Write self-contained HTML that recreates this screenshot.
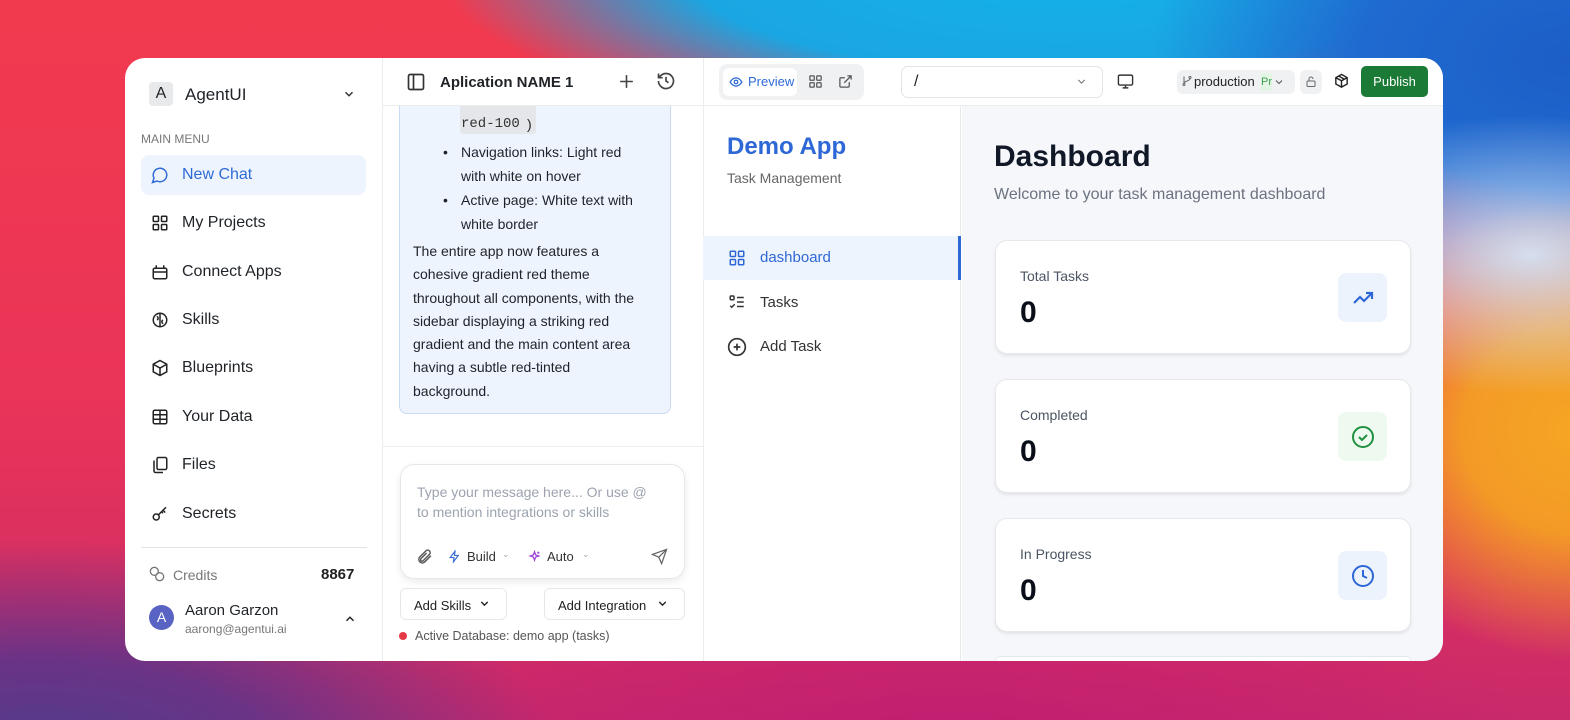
<!DOCTYPE html>
<html><head><meta charset="utf-8">
<style>
*{box-sizing:border-box;margin:0;padding:0}
html,body{width:1570px;height:720px;overflow:hidden}
body{font-family:"Liberation Sans",sans-serif;position:relative;
background:
radial-gradient(ellipse 260px 140px at 1530px 255px,rgba(215,228,245,.95) 0%,rgba(215,228,245,0) 100%),
radial-gradient(ellipse 260px 230px at 1580px 430px,#f6a623 0%,#f39a26 45%,rgba(243,154,38,0) 100%),
radial-gradient(ellipse 420px 260px at 1570px 60px,#1c5ec6 0%,#1f6ad0 50%,rgba(31,106,208,0) 100%),
radial-gradient(ellipse 620px 170px at 1060px -30px,#14b2ea 0%,#1aa6e2 60%,rgba(26,166,226,0) 100%),
radial-gradient(ellipse 520px 220px at 40px 760px,#4e3d8c 0%,#6a3386 45%,rgba(106,51,134,0) 100%),
radial-gradient(ellipse 600px 160px at 950px 740px,#c21d72 0%,rgba(194,29,114,0) 100%),
linear-gradient(180deg,#f23a4e 0%,#ea3458 55%,#c92a6a 100%);}
.win{position:absolute;left:125px;top:58px;width:1318px;height:603px;background:#fff;border-radius:20px;overflow:hidden}
.abs{position:absolute}
svg{display:block}
.nav{position:absolute;left:16px;width:225px;height:40px;display:flex;align-items:center;padding-left:10px;font-size:16px;color:#1f2328}
.nav svg{margin-right:13px}
.t{position:absolute;white-space:nowrap}
.card{position:absolute;left:870px;width:416px;height:114px;background:#fff;border:1px solid #e6e8ec;border-radius:12px;box-shadow:0 2px 3px rgba(0,0,0,.08)}
.card .l{position:absolute;left:24px;top:27px;font-size:14px;color:#4b5563}
.card .v{position:absolute;left:24px;top:55px;font-size:30px;font-weight:bold;color:#0b0f19}
.card .i{position:absolute;left:342px;top:32px;width:49px;height:49px;border-radius:8px;display:flex;align-items:center;justify-content:center}
</style></head><body>
<div class="win">
<!-- sidebar -->
<div class="abs" style="left:0;top:0;width:258px;height:603px;border-right:1px solid #ececec"></div>
<div class="abs" style="left:24px;top:24px;width:24px;height:24px;background:#e8e9eb;border-radius:4px;font-size:16px;text-align:center;line-height:24px;color:#222">A</div>
<div class="t" style="left:60px;top:27px;font-size:17px;color:#1f2328">AgentUI</div>
<svg class="abs" style="left:217px;top:29px" width="14" height="14" viewBox="0 0 24 24" fill="none" stroke="#333" stroke-width="2.5"><path d="M6 9l6 6 6-6"/></svg>
<div class="t" style="left:16px;top:74px;font-size:12px;color:#777">MAIN MENU</div>
<div class="nav" style="top:97px;background:#eef4fd;border-radius:8px;color:#2f6bd6"><svg width="18" height="18" viewBox="0 0 24 24" fill="none" stroke="#2f6bd6" stroke-width="2"><path d="M7.9 20A9 9 0 1 0 4 16.1L2 22z"/></svg>New Chat</div>
<div class="nav" style="top:145px"><svg width="18" height="18" viewBox="0 0 24 24" fill="none" stroke="#222" stroke-width="2"><rect x="3" y="3" width="7" height="7" rx="1"/><rect x="14" y="3" width="7" height="7" rx="1"/><rect x="3" y="14" width="7" height="7" rx="1"/><rect x="14" y="14" width="7" height="7" rx="1"/></svg>My Projects</div>
<div class="nav" style="top:194px"><svg width="18" height="18" viewBox="0 0 24 24" fill="none" stroke="#222" stroke-width="2"><rect x="3" y="7" width="18" height="14" rx="2"/><path d="M7 7V3M17 7V3M3 12h18"/></svg>Connect Apps</div>
<div class="nav" style="top:242px"><svg width="18" height="18" viewBox="0 0 24 24" fill="none" stroke="#222" stroke-width="2"><circle cx="12" cy="12" r="9"/><path d="M12 3v18M8 7c2 2 2 4 0 5M16 12c-2 1-2 3 0 5"/></svg>Skills</div>
<div class="nav" style="top:290px"><svg width="18" height="18" viewBox="0 0 24 24" fill="none" stroke="#222" stroke-width="2"><path d="M12 2l9 5v10l-9 5-9-5V7z M3 7l9 5 9-5M12 12v10"/></svg>Blueprints</div>
<div class="nav" style="top:339px"><svg width="18" height="18" viewBox="0 0 24 24" fill="none" stroke="#222" stroke-width="2"><rect x="3" y="3" width="18" height="18" rx="2"/><path d="M3 9h18M3 15h18M12 3v18"/></svg>Your Data</div>
<div class="nav" style="top:387px"><svg width="18" height="18" viewBox="0 0 24 24" fill="none" stroke="#222" stroke-width="2"><rect x="8" y="2" width="13" height="16" rx="2"/><path d="M4 6v14a2 2 0 0 0 2 2h10"/></svg>Files</div>
<div class="nav" style="top:436px"><svg width="18" height="18" viewBox="0 0 24 24" fill="none" stroke="#222" stroke-width="2"><circle cx="7" cy="16" r="4"/><path d="M10 13l10-10M16 7l3 3M14 9l2 2"/></svg>Secrets</div>
<div class="abs" style="left:16px;top:489px;width:226px;height:1px;background:#e3e3e3"></div>
<svg class="abs" style="left:24px;top:508px" width="16" height="16" viewBox="0 0 24 24" fill="none" stroke="#777" stroke-width="2"><circle cx="8" cy="8" r="6"/><circle cx="16" cy="16" r="6"/></svg>
<div class="t" style="left:48px;top:509px;font-size:14px;color:#777">Credits</div>
<div class="t" style="left:196px;top:508px;font-size:15px;font-weight:bold;color:#222">8867</div>
<div class="abs" style="left:24px;top:547px;width:25px;height:25px;border-radius:50%;background:#5863c4;color:#fff;text-align:center;line-height:25px;font-size:14px">A</div>
<div class="t" style="left:60px;top:544px;font-size:15px;color:#1f2328">Aaron Garzon</div>
<div class="t" style="left:60px;top:564px;font-size:12px;color:#777">aarong@agentui.ai</div>
<svg class="abs" style="left:218px;top:554px" width="14" height="14" viewBox="0 0 24 24" fill="none" stroke="#222" stroke-width="2.5"><path d="M6 15l6-6 6 6"/></svg>

<!-- chat panel -->
<div class="abs" style="left:274px;top:30px;width:272px;height:326px;background:#eef4fd;border:1px solid #c9daf3;border-radius:0 0 8px 8px"></div>
<div class="abs" style="left:335px;top:38px;width:76px;height:38px;background:#e4e6ea;border-radius:3px"></div>
<div class="t" style="left:336px;top:58px;font-size:14px;font-family:'Liberation Mono',monospace;color:#333">red-100</div>
<div class="t" style="left:402px;top:58px;font-size:14px;color:#222">)</div>
<div style="position:absolute;left:288px;top:82px;font-size:14px;line-height:24px;color:#1f2328">
<div class="t" style="left:30px;top:0">•</div><div class="t" style="left:48px;top:0">Navigation links: Light red</div>
<div class="t" style="left:48px;top:24px">with white on hover</div>
<div class="t" style="left:30px;top:48px">•</div><div class="t" style="left:48px;top:48px">Active page: White text with</div>
<div class="t" style="left:48px;top:72px">white border</div>
</div>
<div style="position:absolute;left:288px;top:182px;font-size:14px;line-height:23.3px;color:#1f2328;white-space:nowrap">The entire app now features a<br>cohesive gradient red theme<br>throughout all components, with the<br>sidebar displaying a striking red<br>gradient and the main content area<br>having a subtle red-tinted<br>background.</div>
<div class="abs" style="left:258px;top:0;width:320px;height:48px;border-bottom:1px solid #ececec;background:#fff"></div>
<svg class="abs" style="left:281px;top:14px" width="20" height="20" viewBox="0 0 24 24" fill="none" stroke="#333" stroke-width="2"><rect x="3" y="3" width="18" height="18" rx="2"/><path d="M9 3v18"/></svg>
<div class="t" style="left:315px;top:16px;font-size:15px;font-weight:bold;color:#1f2328">Aplication NAME 1</div>
<svg class="abs" style="left:492px;top:14px" width="19" height="19" viewBox="0 0 24 24" fill="none" stroke="#444" stroke-width="2"><path d="M12 4v16M4 12h16"/></svg>
<svg class="abs" style="left:531px;top:13px" width="20" height="20" viewBox="0 0 24 24" fill="none" stroke="#444" stroke-width="2"><path d="M3 12a9 9 0 1 0 3-6.7L3 8M3 3v5h5M12 7v5l3 2"/></svg>
<div class="abs" style="left:258px;top:388px;width:320px;height:1px;background:#eeeeee"></div>
<div class="abs" style="left:275px;top:406px;width:285px;height:115px;background:#fff;border:1px solid #e5e7eb;border-radius:14px;box-shadow:0 3px 8px rgba(0,0,0,.08)"></div>
<div class="t" style="left:292px;top:424px;font-size:14px;line-height:20px;color:#9ca3af">Type your message here... Or use @<br>to mention integrations or skills</div>
<svg class="abs" style="left:291px;top:490px" width="17" height="17" viewBox="0 0 24 24" fill="none" stroke="#555" stroke-width="2"><path d="M21 11l-9 9a5 5 0 0 1-7-7l9-9a3.5 3.5 0 0 1 5 5l-9 9a2 2 0 0 1-3-3l8-8"/></svg>
<svg class="abs" style="left:323px;top:492px" width="13" height="13" viewBox="0 0 24 24" fill="none" stroke="#3b6fd6" stroke-width="2.2"><path d="M13 2L4 14h7l-1 8 9-12h-7z"/></svg>
<div class="t" style="left:342px;top:491px;font-size:13px;color:#333">Build</div>
<div class="t" style="left:377px;top:491px;font-size:9px;color:#aaa">⌄</div>
<svg class="abs" style="left:403px;top:492px" width="13" height="13" viewBox="0 0 24 24" fill="none" stroke="#9b3fd6" stroke-width="2.2"><path d="M12 3l2 6 6 2-6 2-2 6-2-6-6-2 6-2zM19 3v4M17 5h4"/></svg>
<div class="t" style="left:422px;top:491px;font-size:13px;color:#333">Auto</div>
<div class="t" style="left:457px;top:491px;font-size:9px;color:#aaa">⌄</div>
<svg class="abs" style="left:526px;top:490px" width="17" height="17" viewBox="0 0 24 24" fill="none" stroke="#666" stroke-width="1.8"><path d="M22 2L11 13M22 2l-7 20-4-9-9-4z"/></svg>
<div class="abs" style="left:275px;top:530px;width:107px;height:32px;border:1px solid #e5e7eb;border-radius:6px;font-size:13px;color:#222;padding:9px 0 0 13px">Add Skills</div>
<svg class="abs" style="left:353px;top:539px" width="13" height="13" viewBox="0 0 24 24" fill="none" stroke="#222" stroke-width="2.5"><path d="M6 9l6 6 6-6"/></svg>
<div class="abs" style="left:419px;top:530px;width:141px;height:32px;border:1px solid #e5e7eb;border-radius:6px;font-size:13px;color:#222;padding:9px 0 0 13px">Add Integration</div>
<svg class="abs" style="left:531px;top:539px" width="13" height="13" viewBox="0 0 24 24" fill="none" stroke="#222" stroke-width="2.5"><path d="M6 9l6 6 6-6"/></svg>
<div class="abs" style="left:274px;top:574px;width:8px;height:8px;border-radius:50%;background:#e53945"></div>
<div class="t" style="left:290px;top:571px;font-size:12.5px;color:#555">Active Database: demo app (tasks)</div>

<!-- top right bar -->
<div class="abs" style="left:578px;top:0;width:740px;height:48px;border-bottom:1px solid #ececec;border-left:1px solid #ececec;background:#fff"></div>
<div class="abs" style="left:594px;top:6px;width:145px;height:36px;background:#f0f1f3;border-radius:8px"></div>
<div class="abs" style="left:598px;top:10px;width:74px;height:28px;background:#fff;border-radius:6px"></div>
<svg class="abs" style="left:604px;top:17px" width="14" height="14" viewBox="0 0 24 24" fill="none" stroke="#2f6bd6" stroke-width="2.2"><path d="M2 12s4-7 10-7 10 7 10 7-4 7-10 7S2 12 2 12z"/><circle cx="12" cy="12" r="3"/></svg>
<div class="t" style="left:623px;top:16px;font-size:13px;color:#2f6bd6">Preview</div>
<svg class="abs" style="left:683px;top:16px" width="15" height="15" viewBox="0 0 24 24" fill="none" stroke="#555" stroke-width="2"><rect x="3" y="3" width="7" height="7" rx="1"/><rect x="14" y="3" width="7" height="7" rx="1"/><rect x="3" y="14" width="7" height="7" rx="1"/><rect x="14" y="14" width="7" height="7" rx="1"/></svg>
<svg class="abs" style="left:713px;top:16px" width="15" height="15" viewBox="0 0 24 24" fill="none" stroke="#555" stroke-width="2"><path d="M18 13v6a2 2 0 0 1-2 2H5a2 2 0 0 1-2-2V8a2 2 0 0 1 2-2h6M15 3h6v6M10 14L21 3"/></svg>
<div class="abs" style="left:776px;top:8px;width:202px;height:32px;border:1px solid #e2e4e8;border-radius:7px"></div>
<div class="t" style="left:789px;top:15px;font-size:16px;color:#222">/</div>
<svg class="abs" style="left:950px;top:17px" width="13" height="13" viewBox="0 0 24 24" fill="none" stroke="#777" stroke-width="2"><path d="M6 9l6 6 6-6"/></svg>
<svg class="abs" style="left:992px;top:15px" width="17" height="17" viewBox="0 0 24 24" fill="none" stroke="#333" stroke-width="2"><rect x="2" y="3" width="20" height="14" rx="2"/><path d="M8 21h8M12 17v4"/></svg>
<div class="abs" style="left:1052px;top:12px;width:118px;height:24px;background:#f0f1f3;border-radius:6px"></div>
<svg class="abs" style="left:1056px;top:17px" width="12" height="12" viewBox="0 0 24 24" fill="none" stroke="#666" stroke-width="2"><circle cx="6" cy="19" r="2"/><circle cx="18" cy="5" r="2"/><path d="M6 3v14M18 7c0 6-12 4-12 10"/></svg>
<div class="t" style="left:1069px;top:16px;font-size:13px;color:#222">production</div>
<div class="abs" style="left:1136px;top:15px;width:11px;height:18px;background:#e3f6e6;font-size:11px;color:#3da04d;line-height:18px;overflow:hidden">Pr</div>
<svg class="abs" style="left:1148px;top:18px" width="12" height="12" viewBox="0 0 24 24" fill="none" stroke="#555" stroke-width="2"><path d="M6 9l6 6 6-6"/></svg>
<div class="abs" style="left:1175px;top:12px;width:22px;height:24px;background:#f0f1f3;border-radius:6px"></div>
<svg class="abs" style="left:1180px;top:17px" width="12" height="13" viewBox="0 0 24 24" fill="none" stroke="#666" stroke-width="2"><rect x="4" y="11" width="16" height="11" rx="2"/><path d="M8 11V7a4 4 0 0 1 8 0"/></svg>
<svg class="abs" style="left:1208px;top:15px" width="17" height="17" viewBox="0 0 24 24" fill="none" stroke="#222" stroke-width="2"><path d="M12 2l8 4.5v9L12 20l-8-4.5v-9z M4 6.5L12 11l8-4.5M12 11v9M8 4.3l8 4.5"/></svg>
<div class="abs" style="left:1236px;top:8px;width:67px;height:31px;background:#1b7a35;border-radius:5px;color:#fff;font-size:13px;text-align:center;line-height:31px">Publish</div>

<!-- preview nav -->
<div class="abs" style="left:578px;top:48px;width:258px;height:555px;background:#fff;border-left:1px solid #ececec;border-right:1px solid #e8e8e8"></div>
<div class="t" style="left:602px;top:75px;font-size:24px;font-weight:bold;color:#2e68d6">Demo App</div>
<div class="t" style="left:602px;top:112px;font-size:14px;color:#666">Task Management</div>
<div class="abs" style="left:578px;top:178px;width:258px;height:44px;background:#eef4fd;border-right:3px solid #2e68d6"></div>
<svg class="abs" style="left:603px;top:191px" width="18" height="18" viewBox="0 0 24 24" fill="none" stroke="#2e68d6" stroke-width="2"><rect x="3" y="3" width="7" height="7" rx="1"/><rect x="14" y="3" width="7" height="7" rx="1"/><rect x="3" y="14" width="7" height="7" rx="1"/><rect x="14" y="14" width="7" height="7" rx="1"/></svg>
<div class="t" style="left:635px;top:191px;font-size:15px;color:#2e68d6">dashboard</div>
<svg class="abs" style="left:603px;top:235px" width="18" height="18" viewBox="0 0 24 24" fill="none" stroke="#333" stroke-width="2"><rect x="3" y="4" width="5" height="5" rx="1"/><path d="M3 17l2 2 4-4M12 6h9M12 12h9M12 18h9"/></svg>
<div class="t" style="left:635px;top:236px;font-size:15px;color:#333">Tasks</div>
<svg class="abs" style="left:602px;top:279px" width="20" height="20" viewBox="0 0 24 24" fill="none" stroke="#333" stroke-width="2"><circle cx="12" cy="12" r="10"/><path d="M12 8v8M8 12h8"/></svg>
<div class="t" style="left:635px;top:280px;font-size:15px;color:#333">Add Task</div>

<!-- main -->
<div class="abs" style="left:837px;top:48px;width:481px;height:555px;background:#f6f7fa"></div>
<div class="t" style="left:869px;top:82px;font-size:30px;font-weight:bold;color:#111827">Dashboard</div>
<div class="t" style="left:869px;top:128px;font-size:16px;color:#6b7280">Welcome to your task management dashboard</div>
<div class="card" style="top:182px"><div class="l">Total Tasks</div><div class="v">0</div><div class="i" style="background:#edf3fd"><svg width="24" height="24" viewBox="0 0 24 24" fill="none" stroke="#2e68d6" stroke-width="2.2"><path d="M3 17l6-6 4 4 8-8M15 7h6v6"/></svg></div></div>
<div class="card" style="top:321px"><div class="l">Completed</div><div class="v">0</div><div class="i" style="background:#eefaf0"><svg width="24" height="24" viewBox="0 0 24 24" fill="none" stroke="#22913f" stroke-width="2"><circle cx="12" cy="12" r="10"/><path d="M8 12l3 3 5-5"/></svg></div></div>
<div class="card" style="top:460px"><div class="l">In Progress</div><div class="v">0</div><div class="i" style="background:#edf3fd"><svg width="24" height="24" viewBox="0 0 24 24" fill="none" stroke="#2e68d6" stroke-width="2"><circle cx="12" cy="12" r="10"/><path d="M12 6v6l4 2"/></svg></div></div>
<div class="card" style="top:598px;height:5px;box-shadow:none;border-bottom:none;border-radius:12px 12px 0 0"></div>
</div>
</body></html>
